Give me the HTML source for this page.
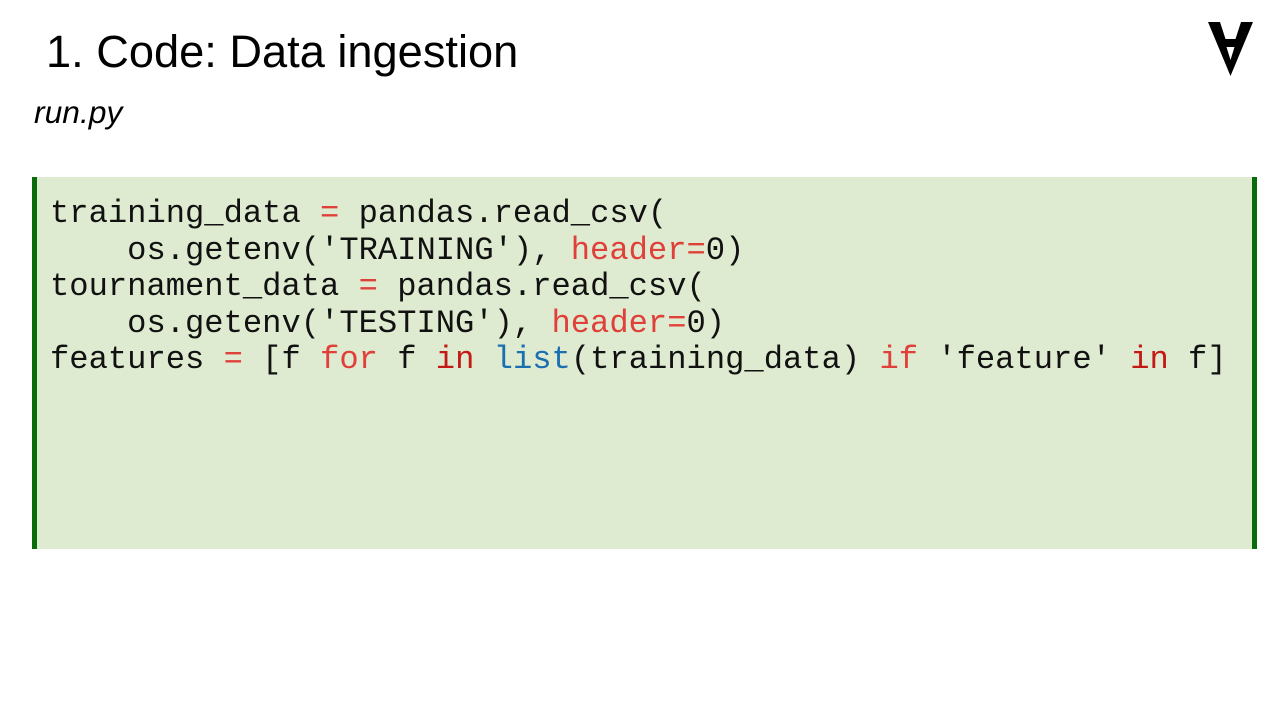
<!DOCTYPE html>
<html><head><style>
body{margin:0;width:1280px;height:720px;background:#fff;position:relative;overflow:hidden;font-family:"Liberation Sans",sans-serif}
.t{position:absolute;left:46px;top:25px;font-size:45.2px;color:#000;line-height:54px}
.s{position:absolute;left:34px;top:94px;font-size:31.8px;font-style:italic;line-height:36px}
.box{position:absolute;left:32px;top:177px;width:1225px;height:372px;background:#deebd0;border-left:5px solid #0a6b0a;border-right:5px solid #0a6b0a;box-sizing:border-box}
pre{position:absolute;left:50px;top:196px;margin:0;font-family:"Liberation Mono",monospace;font-size:32.15px;line-height:36.6px;color:#111}
.r{color:#e0403a}.k{color:#c41a16}.b{color:#1a6fb0}
</style></head><body>
<div class="t">1. Code: Data ingestion</div>
<div class="s">run.py</div>
<svg style="position:absolute;left:1206px;top:20px" width="50" height="58" viewBox="0 0 50 58">
<path d="M2 2 L47 2 L24.5 56 Z" fill="#000"/>
<path d="M14 2 L35 2 L29.5 19 L19.5 19 Z" fill="#fff"/>
<path d="M20.5 27 L28.5 27 L24.5 40 Z" fill="#fff"/>
</svg>
<div class="box"></div>
<pre>training_data <span class="r">=</span> pandas.read_csv(
    os.getenv('TRAINING'), <span class="r">header=</span>0)
tournament_data <span class="r">=</span> pandas.read_csv(
    os.getenv('TESTING'), <span class="r">header=</span>0)
features <span class="r">=</span> [f <span class="r">for</span> f <span class="k">in</span> <span class="b">list</span>(training_data) <span class="r">if</span> 'feature' <span class="k">in</span> f]</pre>
</body></html>
